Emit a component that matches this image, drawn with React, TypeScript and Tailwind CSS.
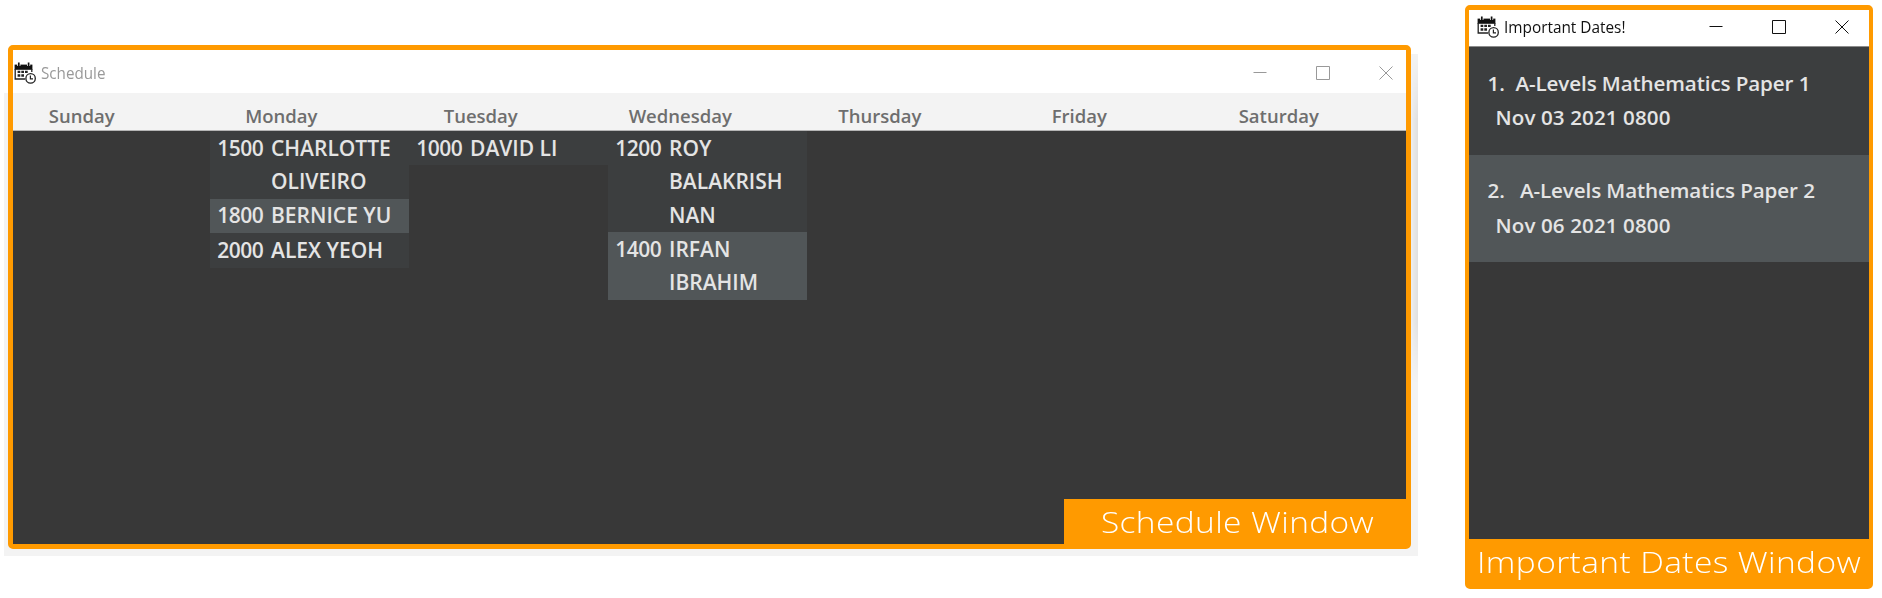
import type { ReactNode } from "react";

type Entry = { time: string; lines: string[] };

const DAYS: { name: string; entries: Entry[] }[] = [
  { name: "Sunday", entries: [] },
  {
    name: "Monday",
    entries: [
      { time: "1500", lines: ["CHARLOTTE", "OLIVEIRO"] },
      { time: "1800", lines: ["BERNICE YU"] },
      { time: "2000", lines: ["ALEX YEOH"] },
    ],
  },
  { name: "Tuesday", entries: [{ time: "1000", lines: ["DAVID LI"] }] },
  {
    name: "Wednesday",
    entries: [
      { time: "1200", lines: ["ROY", "BALAKRISH", "NAN"] },
      { time: "1400", lines: ["IRFAN", "IBRAHIM"] },
    ],
  },
  { name: "Thursday", entries: [] },
  { name: "Friday", entries: [] },
  { name: "Saturday", entries: [] },
];

const DATES = [
  { no: "1.", title: "A-Levels Mathematics Paper 1", when: "Nov 03 2021 0800" },
  { no: "2.", title: "A-Levels Mathematics Paper 2", when: "Nov 06 2021 0800" },
];

function CalendarIcon() {
  return (
    <svg viewBox="0 0 22 22" className="h-[22px] w-[22px] shrink-0" fill="none">
      <path d="M.6 2.6h17.8v5.2H.6z" fill="#111" />
      <path d="M4.8 0v4M14.6 0v4" stroke="#fff" strokeWidth="3.2" />
      <path d="M4.8 .4v3.8M14.6 .4v3.8" stroke="#111" strokeWidth="1.7" />
      <path d="M1.2 7v10h10M17.8 7v3" stroke="#222" strokeWidth="1.3" />
      <path
        d="M3.6 8.8h2.7v2.2H3.6zM7.3 8.8H10V11H7.3zM11 8.8h2.7V11H11zM3.6 12.2h2.7v2.6H3.6zM7.3 12.2H10v2.6H7.3z"
        fill="#222"
      />
      <circle cx="16.6" cy="16.4" r="4.7" fill="#fff" stroke="#222" strokeWidth="1.3" />
      <path d="M16.4 13.6v3.2h2.6" stroke="#222" strokeWidth="1.2" />
    </svg>
  );
}

function Controls() {
  return (
    <div className="flex items-center gap-[49px]">
      <svg viewBox="0 0 14 14" className="h-3.5 w-3.5" stroke="currentColor">
        <path d="M.5 6.5h13" />
      </svg>
      <svg viewBox="0 0 14 14" className="h-3.5 w-3.5" stroke="currentColor" fill="none">
        <path d="M.5 .5h13v13H.5z" />
      </svg>
      <svg viewBox="0 0 14 14" className="h-3.5 w-3.5" stroke="currentColor">
        <path d="M.5 .5l13 13M13.5 .5l-13 13" />
      </svg>
    </div>
  );
}

function WindowLabel({ children }: { children: ReactNode }) {
  return (
    <div className="flex h-[45px] items-center justify-center bg-[#ff9a00] text-[30px] leading-none font-light whitespace-nowrap text-white">
      {children}
    </div>
  );
}

function ScheduleWindow() {
  return (
    <section className="mt-[45px] ml-1 flex h-[511px] w-[1414px] bg-linear-to-b from-white from-[48px] to-[#f3f3f3] to-[48px] pl-1">
      <div className="flex h-[504px] w-[1403px] shrink-0 flex-col overflow-hidden rounded-[5px] border-[5px] border-[#ff9a00] bg-[#383838]">
        <header className="flex h-[43px] shrink-0 items-center justify-between bg-white pt-[3px] pr-[13px] pl-px text-[#999]">
          <div className="flex items-center gap-[5px]">
            <CalendarIcon />
            <span className="inline-block origin-left scale-x-[0.95] text-[16px] leading-none">Schedule</span>
          </div>
          <Controls />
        </header>
        <div className="h-[38px] shrink-0 border-b border-[#b5b5b5] bg-[#f3f3f3] pt-[9px]">
          <div className="-ml-[31px] grid h-full w-[1396.5px] grid-cols-7 items-center text-center text-[18.5px] leading-none font-semibold text-[#6e6e6e]">
            {DAYS.map((d) => (
              <span key={d.name}>{d.name}</span>
            ))}
          </div>
        </div>
        <div className="-ml-[2.5px] grid w-[1393px] flex-1 grid-cols-7 items-start">
          {DAYS.map((d) => (
            <ul key={d.name} className="text-[21px] leading-[33.5px] font-semibold text-[#e4e4e4]">
              {d.entries.map((e) => (
                <li key={e.time} className="flex bg-[#3c3e3f] pt-[0.5px] pb-[0.4px] even:bg-[#515658]">
                  <span className="w-[61.5px] text-center tracking-[-0.5px]">{e.time}</span>
                  <div>
                    {e.lines.map((l) => (
                      <div key={l}>{l}</div>
                    ))}
                  </div>
                </li>
              ))}
            </ul>
          ))}
        </div>
        <div className="flex shrink-0 justify-end">
          <div className="w-[342px]">
            <WindowLabel>
              <span className="ml-[5px] inline-block scale-x-[1.115] tracking-[0.35px]">Schedule Window</span>
            </WindowLabel>
          </div>
        </div>
      </div>
      <div className="mt-[9px] h-[330px] flex-1 bg-[#f3f3f3]">
        <div className="h-full bg-linear-to-r from-black/2 to-black/8 mask-t-from-80% mask-b-from-80%" />
      </div>
    </section>
  );
}

function DatesWindow() {
  return (
    <section className="mt-[5px] ml-[47px] flex h-[584px] w-[408px] flex-col overflow-hidden rounded-[5px] border-x-4 border-y-5 border-[#ff9a00] bg-[#383838]">
      <header className="flex h-[37px] shrink-0 items-center justify-between border-b border-[#8c8c8c] bg-white pr-[20.5px] pb-[3px] pl-[8px] text-[#111]">
        <div className="flex items-center gap-[5px]">
          <CalendarIcon />
          <span className="inline-block origin-left scale-x-[0.96] text-[16px] leading-none">Important Dates!</span>
        </div>
        <Controls />
      </header>
      <ul className="flex-1 text-[20.6px] leading-[34.5px] font-semibold text-[#e4e4e4]">
        {DATES.map((d) => (
          <li key={d.no} className="group h-[107.7px] bg-[#3c3e3f] pt-[18.5px] pl-[18.5px] even:bg-[#515658]">
            <div className="flex gap-[10.5px] group-even:gap-[15px]">
              <span>{d.no}</span>
              <span className="tracking-[-0.1px]">{d.title}</span>
            </div>
            <div className="pl-[8px] tracking-[0.1px]">{d.when}</div>
          </li>
        ))}
      </ul>
      <WindowLabel>
        <span className="inline-block scale-x-[1.116] tracking-[0.35px]">Important Dates Window</span>
      </WindowLabel>
    </section>
  );
}

export default function App() {
  return (
    <main className="flex h-[598px] w-[1882px] items-start overflow-hidden bg-white font-['Open_Sans','Noto_Sans',sans-serif]">
      <ScheduleWindow />
      <DatesWindow />
    </main>
  );
}
